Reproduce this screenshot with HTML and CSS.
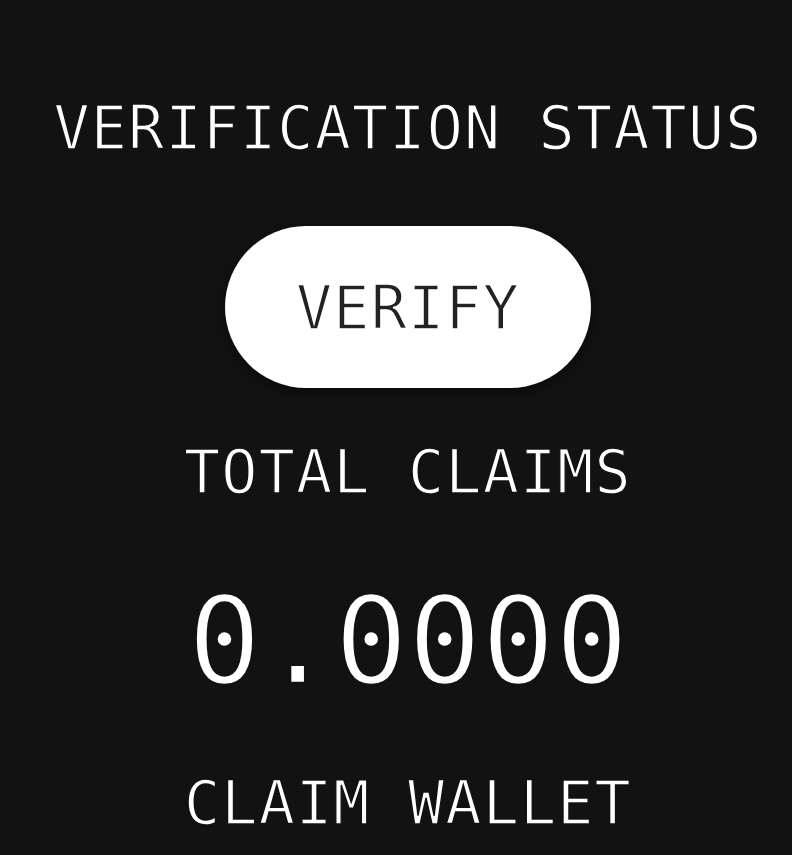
FILE: index.html
```html
<!DOCTYPE html>
<html lang="en">
<head>
<meta charset="utf-8">
<title>Verification Status</title>
<link rel="stylesheet" href="styles.css">
</head>
<body>
<main class="panel">
  <h2 class="label label-status">VERIFICATION STATUS</h2>
  <button class="verify-btn" type="button">VERIFY</button>
  <h2 class="label label-claims">TOTAL CLAIMS</h2>
  <div class="amount">0.0000</div>
  <h2 class="label label-wallet">CLAIM WALLET</h2>
</main>
</body>
</html>
```

FILE: styles.css
```css
html, body {
  margin: 0;
  padding: 0;
  background: #121212;
  height: 100%;
  overflow: hidden;
}

.panel {
  display: flex;
  flex-direction: column;
  align-items: center;
  padding: 98px 0 0 24px;
  font-family: "DejaVu Sans Mono", "Liberation Mono", monospace;
  color: #ffffff;
}

.label {
  margin: 0;
  font-weight: normal;
  font-size: 60px;
  line-height: 60px;
  letter-spacing: 1.2px;
  white-space: nowrap;
  -webkit-text-stroke: 1.4px #121212;
}

.verify-btn {
  margin-top: 68px;
  width: 366px;
  height: 162px;
  border: none;
  border-radius: 81px;
  background: #ffffff;
  color: #222222;
  font-family: "DejaVu Sans Mono", "Liberation Mono", monospace;
  font-size: 60px;
  line-height: 60px;
  letter-spacing: 1.2px;
  padding: 2px 0 0;
  box-shadow: 0 4px 14px rgba(0, 0, 0, 0.45);
  -webkit-text-stroke: 1.4px #ffffff;
}

.label-claims {
  margin-top: 54px;
}

.amount {
  margin-top: 78px;
  font-size: 122px;
  line-height: 122px;
  white-space: nowrap;
  -webkit-text-stroke: 2.4px #121212;
}

.label-wallet {
  margin-top: 71px;
}
```
